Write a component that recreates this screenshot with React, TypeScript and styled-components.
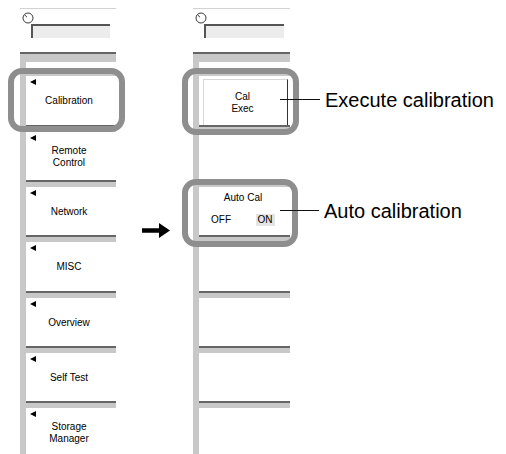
import styled, { createGlobalStyle } from 'styled-components';

const GlobalStyle = createGlobalStyle`
  html, body {
    margin: 0;
    padding: 0;
    background: #fff;
  }
  body {
    font-family: "Liberation Sans", Arial, sans-serif;
  }
`;

interface RingOffsets {
  $top: number;
  $right: number;
  $bottom: number;
  $left: number;
}

const leftMenu = [
  'Calibration',
  'Remote\nControl',
  'Network',
  'MISC',
  'Overview',
  'Self Test',
  'Storage\nManager',
];

function Knob() {
  return (
    <svg width="12" height="12" viewBox="0 0 12 12">
      <circle cx="6" cy="6" r="5" fill="#fff" stroke="#3a3a3a" strokeWidth="1" />
      <line x1="2.6" y1="2.8" x2="5" y2="5.2" stroke="#3a3a3a" strokeWidth="1" />
    </svg>
  );
}

function RightArrow() {
  return (
    <svg width="28" height="15" viewBox="0 0 28 15">
      <path d="M0 5.2 H17 V0 L28 7.5 L17 15 V9.8 H0 Z" fill="#000" />
    </svg>
  );
}

function PanelTop() {
  return (
    <TopSection>
      <Knob />
      <InputBox />
    </TopSection>
  );
}

export default function App() {
  return (
    <>
      <GlobalStyle />
      <Figure>
        <Panel $width={96}>
          <PanelTop />
          <Column>
            <HeadBand />
            <HeadGap />
            {leftMenu.map((label, i) => (
              <Block key={label}>
                {i === 0 && <Ring $top={-3.33} $right={-9} $bottom={-7.33} $left={-18} />}
                <Band />
                <MenuBody>
                  <Marker />
                  <Label>{label}</Label>
                </MenuBody>
              </Block>
            ))}
          </Column>
        </Panel>

        <ArrowColumn>
          <RightArrow />
        </ArrowColumn>

        <Panel $width={97}>
          <PanelTop />
          <Column>
            <HeadBand />
            <HeadGap />
            <Block>
              <Ring $top={-3.33} $right={-9} $bottom={-10.33} $left={-17} />
              <Band />
              <SoftBody>
                <CalButton>
                  <Label>{'Cal\nExec'}</Label>
                </CalButton>
              </SoftBody>
            </Block>
            <Block>
              <Band />
              <SoftBody />
            </Block>
            <Block>
              <Ring $top={-3} $right={-8} $bottom={-11.67} $left={-17} />
              <Band />
              <ToggleBody>
                <ToggleTitle>Auto Cal</ToggleTitle>
                <Options>
                  <Option>OFF</Option>
                  <Option $active>ON</Option>
                </Options>
              </ToggleBody>
            </Block>
            {[0, 1, 2, 3].map((n) => (
              <Block key={n}>
                <Band />
                <SoftBody />
              </Block>
            ))}
          </Column>
        </Panel>

        <CalloutColumn>
          <Callout $offset={80.5}>
            <Leader $width={40} />
            <CalloutText>Execute calibration</CalloutText>
          </Callout>
          <Callout $offset={89.2}>
            <Leader $width={39} />
            <CalloutText>Auto calibration</CalloutText>
          </Callout>
        </CalloutColumn>
      </Figure>
    </>
  );
}

const Figure = styled.div`
  position: relative;
  display: flex;
  align-items: flex-start;
  width: 506px;
  height: 454px;
  padding: 8px 0 0 20px;
  box-sizing: border-box;
  overflow: hidden;
`;

const Panel = styled.div<{ $width: number }>`
  display: flex;
  flex-direction: column;
  flex: none;
  width: ${({ $width }) => $width}px;
`;

const TopSection = styled.div`
  display: flex;
  flex-direction: column;
  height: 46px;
  padding: 3px 6px 0 2px;
  box-sizing: border-box;
  border-top: 1px solid #d2d2d2;
  border-bottom: 2px solid #666;
`;

const InputBox = styled.div`
  height: 14px;
  margin-left: 9px;
  box-sizing: border-box;
  background: #ececec;
  border-top: 2px solid #555;
  border-left: 2px solid #555;
`;

const Column = styled.div`
  display: flex;
  flex-direction: column;
  border-left: 6px solid #c8c8c8;
`;

const HeadBand = styled.div`
  height: 8px;
  background: #c8c8c8;
`;

const HeadGap = styled.div`
  height: 7.33px;
  background: #fff;
`;

const Block = styled.div`
  position: relative;
  display: flex;
  flex-direction: column;
  flex: none;
  height: 55.33px;
  box-sizing: border-box;
  border-top: 2px solid #666;
`;

const Band = styled.div`
  flex: none;
  height: 5px;
  background: #c8c8c8;
`;

const MenuBody = styled.div`
  position: relative;
  flex: 1;
  display: flex;
  align-items: center;
  justify-content: center;
  padding: 2px 4px 0 0;
`;

const SoftBody = styled.div`
  flex: 1;
  display: flex;
  align-items: stretch;
`;

const Marker = styled.span`
  position: absolute;
  left: 4px;
  top: 3px;
  width: 0;
  height: 0;
  border-right: 6px solid #000;
  border-top: 3.5px solid transparent;
  border-bottom: 3.5px solid transparent;
`;

const Label = styled.div`
  font-size: 10px;
  line-height: 12px;
  color: #000;
  text-align: center;
  white-space: pre-line;
`;

const CalButton = styled.div`
  flex: 1;
  display: flex;
  align-items: center;
  justify-content: center;
  margin: 2.67px 2px 0 4px;
  padding: 2px 6px 0 0;
  border-top: 1px solid #d6d6d6;
  border-left: 1px solid #d6d6d6;
  border-right: 1px solid #333;
`;

const ToggleBody = styled.div`
  flex: 1;
  display: flex;
  flex-direction: column;
  padding: 5px 3px 0 0;
  font-size: 10px;
  line-height: 12px;
  color: #000;
`;

const ToggleTitle = styled.div`
  text-align: center;
`;

const Options = styled.div`
  display: grid;
  grid-template-columns: 1fr 1fr;
  margin-top: 10px;
  justify-items: center;
`;

const Option = styled.span<{ $active?: boolean }>`
  padding: 0 2px;
  background: ${({ $active }) => ($active ? '#e4e4e4' : 'transparent')};
`;

const Ring = styled.div<RingOffsets>`
  position: absolute;
  top: ${({ $top }) => $top}px;
  right: ${({ $right }) => $right}px;
  bottom: ${({ $bottom }) => $bottom}px;
  left: ${({ $left }) => $left}px;
  border: 6px solid #8e8e8e;
  border-radius: 14px;
  z-index: 2;
  pointer-events: none;
`;

const ArrowColumn = styled.div`
  flex: none;
  width: 77px;
  padding: 215px 0 0 26px;
  box-sizing: border-box;
  line-height: 0;
`;

const CalloutColumn = styled.div`
  flex: 1;
  display: flex;
  flex-direction: column;
  position: relative;
  z-index: 3;
`;

const Callout = styled.div<{ $offset: number }>`
  display: flex;
  align-items: center;
  height: 22px;
  margin-top: ${({ $offset }) => $offset}px;
  margin-left: -10px;
`;

const Leader = styled.div<{ $width: number }>`
  flex: none;
  width: ${({ $width }) => $width}px;
  height: 1px;
  background: #111;
`;

const CalloutText = styled.span`
  margin-left: 5px;
  font-size: 20px;
  line-height: 22px;
  color: #000;
  white-space: nowrap;
`;
